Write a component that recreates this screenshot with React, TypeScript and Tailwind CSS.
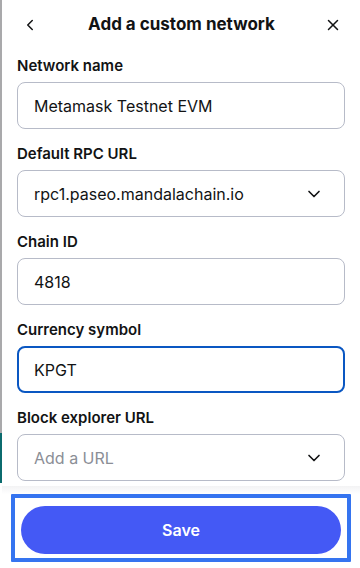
import React from "react";
import { ChevronLeft, ChevronDown, X } from "lucide-react";

const FONT = "font-['Inter','Noto_Sans',sans-serif]";

interface FieldProps {
  label: string;
  value: string;
  placeholder?: boolean;
  select?: boolean;
  focused?: boolean;
}

const Field: React.FC<FieldProps> = ({ label, value, placeholder, select, focused }) => {
  return (
    <div className="flex flex-col">
      <label className="text-[15px] font-semibold leading-[20px] text-[#121314] mb-[6px]">{label}</label>
      <div
        className={
          focused
            ? "flex h-[47px] items-center justify-between rounded-[8px] border-2 border-[#0a57c2] pl-[15px] pr-[19px]"
            : "flex h-[47px] items-center justify-between rounded-[8px] border border-[#b7bbc8] pl-[16px] pr-[20px]"
        }
      >
        <span className={placeholder ? "text-[16px] text-[#8b8e96]" : "text-[16px] text-[#121314]"}>{value}</span>
        {select && <ChevronDown className="h-[20px] w-[20px] text-[#121314]" strokeWidth={2} />}
      </div>
    </div>
  );
};

const App: React.FC = () => {
  return (
    <div className={`${FONT} flex h-[568px] w-[360px] bg-white`}>
      <div className="flex w-[2px] flex-col">
        <div className="h-[433px] bg-[#a9a9ab]" />
        <div className="h-[50px] bg-[#0b6b6e]" />
      </div>
      <div className="flex flex-1 flex-col">
        <div className="flex h-[50px] items-center justify-between pl-[19px] pr-[18px]">
          <ChevronLeft className="h-[18px] w-[18px] text-[#121314]" strokeWidth={2} />
          <h1 className="text-[17px] font-bold text-[#121314]">Add a custom network</h1>
          <X className="h-[18px] w-[18px] text-[#121314]" strokeWidth={2} />
        </div>
        <div className="flex flex-col gap-[15px] px-[15px] pt-[6px]">
          <Field label="Network name" value="Metamask Testnet EVM" />
          <Field label="Default RPC URL" value="rpc1.paseo.mandalachain.io" select />
          <Field label="Chain ID" value="4818" />
          <Field label="Currency symbol" value="KPGT" focused />
          <Field label="Block explorer URL" value="Add a URL" placeholder select />
        </div>
        <div className="mt-auto flex flex-col">
          <div className="h-[8px] bg-gradient-to-b from-[#f3f3f4] to-white" />
          <div className="mx-[9px] mb-[6px] rounded-[1px] border-4 border-[#3574f0] p-[6px] pt-[8px] pb-[4px]">
            <button className="flex h-[48px] w-full items-center justify-center rounded-full bg-[#4459f5] text-[16px] font-semibold text-white">
              Save
            </button>
          </div>
        </div>
      </div>
    </div>
  );
};

export default App;
